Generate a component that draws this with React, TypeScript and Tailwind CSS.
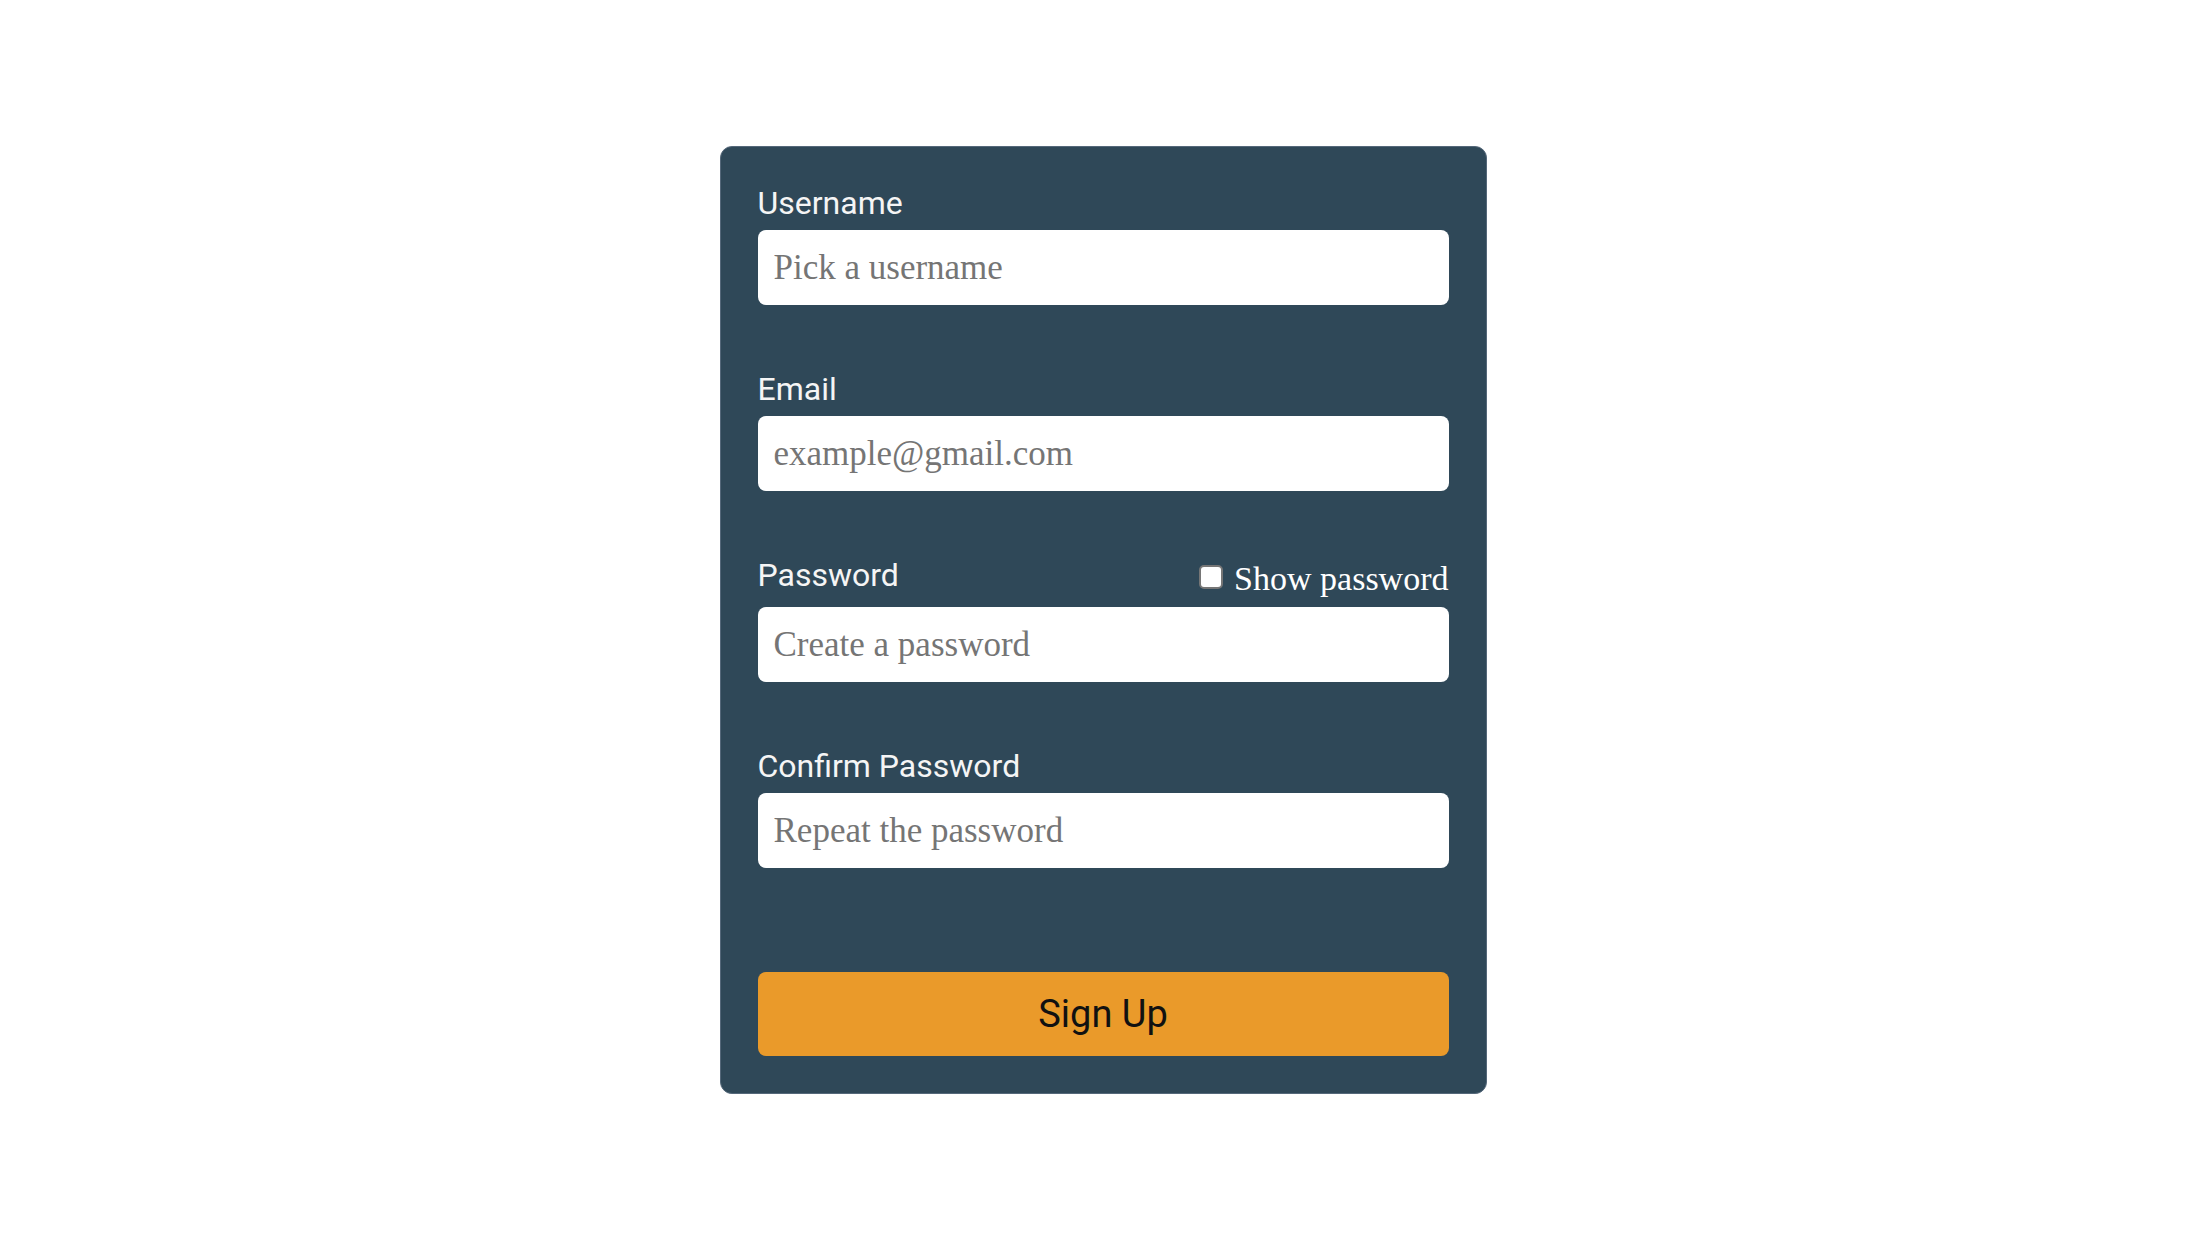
import { useState } from 'react';

const labelCls = "block text-[32px] leading-[35px] text-[#f5f5f5] font-['Roboto',sans-serif]";
const inputCls =
  "mt-[9px] block w-full h-[75px] rounded-lg bg-white px-4 text-[35px] text-[#333] outline-none font-['Liberation_Serif',serif] placeholder:text-[#757575]";

export default function App() {
  const [show, setShow] = useState(false);

  return (
    <div className="min-h-screen w-full bg-white flex items-center justify-center">
      <form
        className="w-[767px] rounded-xl border border-[#55687a] bg-[#2f4858] px-[37px] pt-[39px] pb-[37px]"
        onSubmit={e => e.preventDefault()}
      >
        {/* username */}
        <div>
          <label className={labelCls}>Username</label>
          <input className={inputCls} type="text" placeholder="Pick a username" />
        </div>

        {/* email */}
        <div className="mt-[67px]">
          <label className={labelCls}>Email</label>
          <input className={inputCls} type="email" placeholder="example@gmail.com" />
        </div>

        {/* password */}
        <div className="mt-[67px]">
          <div className="flex items-start justify-between h-[40px]">
            <label className={labelCls}>Password</label>
            <label className="flex items-center h-[40px] text-[34px] text-white font-['Liberation_Serif',serif]">
              <input
                type="checkbox"
                checked={show}
                onChange={() => setShow(!show)}
                className="appearance-none m-0 mr-[11px] w-[24px] h-[24px] -mt-[3px] rounded-[5px] border-2 border-[#767676] bg-white checked:bg-[#0075ff] checked:border-[#0075ff]"
              />
              Show password
            </label>
          </div>
          <input className={inputCls} type={show ? 'text' : 'password'} placeholder="Create a password" />
        </div>

        {/* confirm */}
        <div className="mt-[67px]">
          <label className={labelCls}>Confirm Password</label>
          <input className={inputCls} type={show ? 'text' : 'password'} placeholder="Repeat the password" />
        </div>

        <button
          type="submit"
          className="mt-[104px] block w-full h-[84px] rounded-lg bg-[#ea9a2a] text-[38px] text-[#111] font-['Roboto',sans-serif]"
        >
          Sign Up
        </button>
      </form>
    </div>
  );
}
